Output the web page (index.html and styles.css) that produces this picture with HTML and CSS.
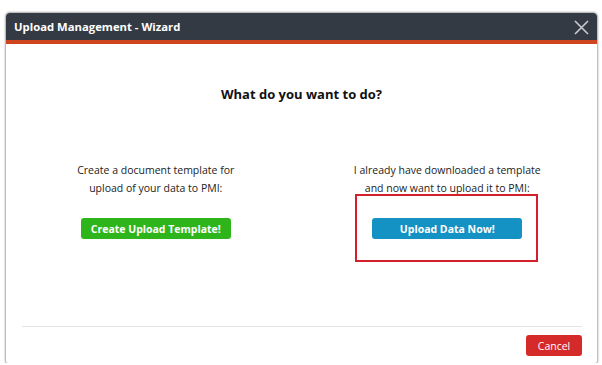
FILE: index.html
```html
<!DOCTYPE html>
<html lang="en">
<head>
    <meta charset="UTF-8">
    <meta name="viewport" content="width=device-width, initial-scale=1.0">
    <title>Upload Management - Wizard</title>
    <link rel="stylesheet" href="styles.css">
</head>
<body>
    <div class="dialog">
        <!-- Title bar -->
        <div class="dialog-header">
            <span class="dialog-title">Upload Management - Wizard</span>
            <button class="close-btn" aria-label="Close">
                <svg width="15" height="15" viewBox="0 0 15 15">
                    <path d="M1 1 L14 14 M14 1 L1 14" stroke="#c9ccd1" stroke-width="1.6" fill="none"/>
                </svg>
            </button>
        </div>

        <!-- Content -->
        <div class="dialog-body">
            <h2 class="question">What do you want to do?</h2>
            <div class="options">
                <div class="option">
                    <p>Create a document template for<br>upload of your data to PMI:</p>
                    <button class="btn btn-green">Create Upload Template!</button>
                </div>
                <div class="option">
                    <p>I already have downloaded a template<br>and now want to upload it to PMI:</p>
                    <div class="highlight">
                        <button class="btn btn-blue">Upload Data Now!</button>
                    </div>
                </div>
            </div>
        </div>

        <!-- Footer -->
        <div class="dialog-footer">
            <button class="btn-cancel">Cancel</button>
        </div>
    </div>
</body>
</html>
```
FILE: styles.css
```css
/* Global Styles */
body {
    font-family: 'Open Sans', 'Liberation Sans', sans-serif;
    background-color: #ffffff;
    color: #222;
    margin: 0;
    padding: 0;
}

/* Dialog window */
.dialog {
    margin: 13px 0 0 6px;
    width: 591px;
    height: 350px;
    background-color: #ffffff;
    border-radius: 4px 4px 2px 2px;
    box-shadow: 0 0 2px 1px rgba(0, 0, 0, 0.35);
    display: flex;
    flex-direction: column;
    overflow: hidden;
}

.dialog-header {
    height: 27px;
    background-color: #343a43;
    border-bottom: 4px solid #cf4520;
    display: flex;
    align-items: center;
    justify-content: space-between;
    padding: 0 8px 0 8px;
}

.dialog-title {
    color: #ffffff;
    font-size: 11.3px;
    font-weight: bold;
}

.close-btn {
    background: none;
    border: none;
    padding: 0;
    margin-top: 1px;
    display: flex;
    cursor: pointer;
}

/* Content */
.dialog-body {
    flex: 1;
    padding: 0 4px;
}

.question {
    margin: 41px 0 0 0;
    font-size: 13px;
    font-weight: bold;
    text-align: center;
    color: #111;
}

.options {
    display: grid;
    grid-template-columns: 1fr 1fr;
    margin-top: 58px;
}

.option {
    display: flex;
    flex-direction: column;
    align-items: center;
    text-align: center;
}

.option p {
    margin: 0;
    font-size: 10.5px;
    line-height: 18px;
    color: #222;
}

.btn {
    width: 150px;
    height: 21px;
    margin-top: 21px;
    border: none;
    border-radius: 3px;
    color: #ffffff;
    font-family: inherit;
    font-size: 10.5px;
    font-weight: bold;
    cursor: pointer;
}

.btn-green {
    background-color: #2fb51c;
}

.btn-blue {
    background-color: #1592c4;
}

/* Red annotation around the upload button */
.highlight {
    position: relative;
    display: flex;
}

.highlight::after {
    content: "";
    position: absolute;
    left: -17px;
    right: -16px;
    top: -3px;
    bottom: -23px;
    border: 2px solid #d4202c;
}

/* Footer */
.dialog-footer {
    margin: 0 15px 0 16px;
    border-top: 1px solid #e2e4e6;
    padding: 8px 0 7px 0;
    display: flex;
    justify-content: flex-end;
}

.btn-cancel {
    width: 56px;
    height: 21px;
    border: none;
    border-radius: 3px;
    background-color: #d42a2a;
    color: #ffffff;
    font-family: inherit;
    font-size: 10.5px;
    cursor: pointer;
}
```
